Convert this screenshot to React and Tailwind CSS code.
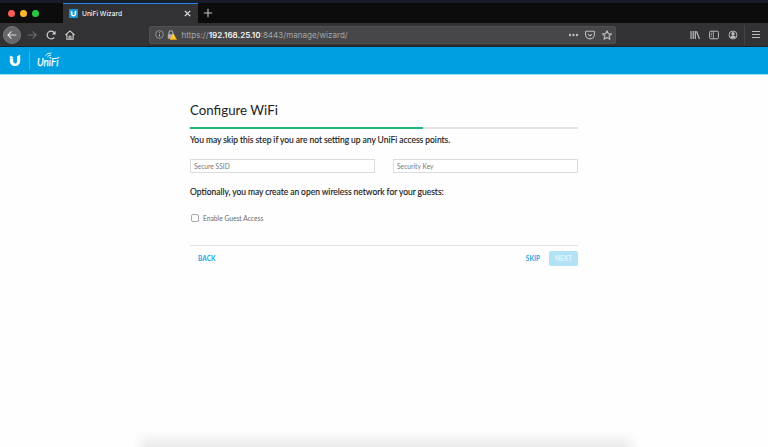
import React from "react";

const ui = "font-['Inter','Roboto',sans-serif]";

function UMark({ className }) {
  return (
    <svg className={className} viewBox="0 0 12 13" fill="none">
      <path d="M.8 1.500v5.200c0 3.200 2.200 5.300 5.200 5.300s5.200-2.100 5.200-5.300V.8L8 2.300v4.900c0 1.700-.8 2.300-1.800 2.300S4.200 8.600 4.200 6.800V2.800z" fill="#fff" />
      <path d="M1.900 .9v4.500M3.400 2.200v3" stroke="#009fe1" strokeWidth=".6" strokeDasharray=".8 .8" />
    </svg>
  );
}

function TabStrip() {
  return (
    <div className="flex h-5 bg-[#0c0c0c]">
      <div className="flex w-[63px] items-center gap-[5px] pl-2">
        <span className="size-[7px] rounded-full bg-[#fc5b57]" />
        <span className="size-[7px] rounded-full bg-[#fdb72b]" />
        <span className="size-[7px] rounded-full bg-[#27c840]" />
      </div>
      <div className="flex w-[135px] items-center border-t border-[#2686ee] bg-[#323234] pl-1.5 pr-[7px]">
        <span className="flex size-[9px] items-center justify-center bg-[#1294d6]">
          <UMark className="size-[7px]" />
        </span>
        <span className={`${ui} ml-1 pt-[2px] text-[6.600px] leading-none font-medium text-[#f0f0f0]`}>UniFi Wizard</span>
        <svg className="ml-auto size-[7px]" viewBox="0 0 7 7" stroke="#ededed" strokeWidth="1.100">
          <path d="M.8.8l5.400 5.400M6.200.8L.8 6.200" />
        </svg>
      </div>
      <div className="flex items-center pl-[5px]">
        <svg className="size-[10px]" viewBox="0 0 10 10" stroke="#c4c4c4" strokeWidth="1.100">
          <path d="M5 .8v8.400M.8 5h8.400" />
        </svg>
      </div>
    </div>
  );
}

function Toolbar() {
  return (
    <div className="flex h-6 items-center border-b border-[#222226] bg-[#323234] pl-[3px] pr-[7px]">
      <span className="flex size-[18px] items-center justify-center rounded-full border border-[#777] bg-[#666668]">
        <svg className="size-[10px]" viewBox="0 0 10 10" fill="none" stroke="#ddd" strokeWidth="1.100">
          <path d="M9.500 5H1M4.500 1.300L.9 5l3.600 3.700" />
        </svg>
      </span>
      <svg className="ml-1.5 size-[10px]" viewBox="0 0 10 10" fill="none" stroke="#6d6d6f" strokeWidth="1.100">
        <path d="M.5 5H9M5.500 1.300L9.100 5 5.500 8.700" />
      </svg>
      <svg className="ml-[9px] size-[10px]" viewBox="0 0 10 10" fill="none" stroke="#cfcfcf" strokeWidth="1.200">
        <path d="M8.200 7.300A3.900 3.900 0 1 1 8.200 2.700" />
        <path d="M9.600.8v3.700H5.900z" fill="#cfcfcf" stroke="none" />
      </svg>
      <svg className="ml-[9px] size-[10px]" viewBox="0 0 10 10" fill="none" stroke="#cfcfcf" strokeWidth="1.100">
        <path d="M.5 5L5 .9 9.500 5M1.900 4.300v4.900h6.200V4.300M4.100 9.200V6.200h1.800v3" />
      </svg>
      <div className="ml-[74px] flex h-[18px] w-[467px] items-center rounded-[2px] border border-[#505052] bg-[#474749] pl-[5px] pr-[3px]">
        <svg className="size-[9px]" viewBox="0 0 9 9" fill="none" stroke="#a4a4a6" strokeWidth=".8">
          <circle cx="4.500" cy="4.500" r="3.900" />
          <path d="M4.500 4v2.700M4.500 2.200v.9" strokeWidth="1" />
        </svg>
        <svg className="ml-[3px] h-[10px] w-[10px]" viewBox="0 0 10 10" fill="none">
          <path d="M2 4.500V2.600a1.900 1.900 0 0 1 3.800 0v1.900" stroke="#b0b0b0" strokeWidth="1.100" />
          <path d="M.8 4.200h6v4.500h-6z" fill="#b0b0b0" />
          <path d="M6.300 3.300L10 9.700H2.600z" fill="#fbbb16" />
          <path d="M6.300 5.500v2M6.300 8.100v.7" stroke="#fff" strokeWidth=".7" />
        </svg>
        <span className={`${ui} ml-[4.500px] pt-[2px] whitespace-nowrap text-[8.060px] leading-none text-[#a6a6a8]`}>
          https://<span className="font-semibold text-[#f2f2f2]">192.168.25.10</span>:8443/manage/wizard/
        </span>
        <svg className="ml-auto h-[10px] w-[11px]" viewBox="0 0 11 10" fill="#bcbcbc">
          <circle cx="2" cy="5" r="1.200" /><circle cx="5.500" cy="5" r="1.200" /><circle cx="9" cy="5" r="1.200" />
        </svg>
        <svg className="ml-1.5 size-[10px]" viewBox="0 0 10 10" fill="none" stroke="#bcbcbc" strokeWidth="1.100">
          <path d="M1.300 1.300h7.400q.7 0 .7.700v2.500a4.400 4.400 0 0 1-8.800 0V2q0-.7.700-.7zM3 4.200l2 1.900 2-1.900" />
        </svg>
        <svg className="ml-[7px] size-[10px]" viewBox="0 0 10 10" fill="none" stroke="#bcbcbc" strokeWidth="1.100" strokeLinejoin="round">
          <path d="M5 .7l1.300 2.900 3.200.3-2.400 2.100.8 3.200L5 7.500 2.100 9.200l.8-3.200L.5 3.900l3.200-.3z" />
        </svg>
      </div>
      <svg className="ml-[74px] size-[10px]" viewBox="0 0 10 10" fill="none" stroke="#bcbcbc" strokeWidth="1.200">
        <path d="M1 1v8M3.200 1v8M5.300 1v8M6.500 1.300l3 7.700" />
      </svg>
      <svg className="ml-[9px] size-[10px]" viewBox="0 0 10 10" fill="none" stroke="#bcbcbc">
        <rect x=".6" y="1.200" width="8.800" height="7.600" rx="1.200" />
        <path d="M4.400 1.500v7M1.900 3.200h1.300M1.900 4.700h1.300M1.900 6.200h1.300" strokeWidth=".8" />
      </svg>
      <svg className="ml-[9px] size-[10px]" viewBox="0 0 10 10" fill="none" stroke="#bcbcbc">
        <circle cx="5" cy="5" r="4" strokeWidth=".9" />
        <circle cx="5" cy="3.800" r="1.700" fill="#bcbcbc" stroke="none" />
        <path d="M2.100 7.300q.4-1.800 2.900-1.800t2.900 1.800Q5 9.200 2.100 7.300z" fill="#bcbcbc" stroke="none" />
      </svg>
      <span className="ml-1.5 h-5 w-px bg-[#444446]" />
      <svg className="ml-[7px] h-[9px] w-[8px]" viewBox="0 0 8 9" stroke="#bcbcbc" strokeWidth="1.100">
        <path d="M0 1.500h8M0 4.500h8M0 7.500h8" />
      </svg>
    </div>
  );
}

function BrandBar() {
  return (
    <div className="flex h-[27px] items-center bg-[#009fe1]">
      <UMark className="ml-[9px] h-[13px] w-[12px]" />
      <span className="ml-2 h-[19px] w-px bg-[#38b3e7]" />
      <svg className="ml-[6px] h-[18px] w-[27px]" viewBox="0 0 27 18" fill="none">
        <text x="1" y="13.800" fill="#fff" stroke="#fff" strokeWidth=".25" fontFamily="Lato, sans-serif" fontSize="12" fontStyle="italic" textLength="21.500" lengthAdjust="spacingAndGlyphs">UniFi</text>
        <path d="M11.400 4.900Q12.600 3 15 3.200M9.400 3.800Q11.400.7 15.400 1" stroke="#fff" strokeWidth=".9" />
        <path d="M23.500 5.500h1" stroke="#9edbf4" strokeWidth=".7" />
      </svg>
    </div>
  );
}

export default function App() {
  return (
    <div className="flex h-[447px] w-[768px] flex-col overflow-hidden bg-[#fefefe] font-['Lato',sans-serif]">
      <div className="h-[3px] bg-[#181e29]" />
      <TabStrip />
      <Toolbar />
      <BrandBar />
      <div className="h-px shrink-0 bg-[#a5def5]" />
      <main className="ml-[190px] w-[388px] pt-[26px]">
        <h1 className="h-[26px] text-[13.300px] leading-[18px] whitespace-nowrap text-[#222]">Configure WiFi</h1>
        <div className="h-0.5 bg-[#e3e3e3]">
          <div className="h-full w-[233px] bg-[#1fb574]" />
        </div>
        <p className="mt-[6px] text-[8.500px] leading-[11px] whitespace-nowrap text-[#222] [word-spacing:-0.2px] [-webkit-text-stroke:0.15px_#222]">
          You may skip this step if you are not setting up any UniFi access points.
        </p>
        <div className="mt-[13px] flex gap-[18px]">
          <input placeholder="Secure SSID" className="h-[14px] w-[185px] border border-[#dadddd] bg-white px-[3px] pb-px text-[6.700px] leading-none placeholder:text-[#777]" />
          <input placeholder="Security Key" className="h-[14px] w-[185px] border border-[#dadddd] bg-white px-[3px] pb-px text-[6.700px] leading-none placeholder:text-[#777]" />
        </div>
        <p className="mt-[14px] text-[8.500px] leading-[11px] whitespace-nowrap text-[#222] [word-spacing:-0.25px] [-webkit-text-stroke:0.15px_#222]">
          Optionally, you may create an open wireless network for your guests:
        </p>
        <label className="mt-[14px] flex h-3 items-center pl-px text-[6.700px] leading-none text-[#6c6c6c]">
          <span className="mr-[4px] size-2 rounded-[2px] border border-[#aaa] bg-white" />
          Enable Guest Access
        </label>
        <div className="mt-[21px] flex h-[21px] items-end border-t border-[#dfdfdf] text-[6.500px] font-bold tracking-[0.050px] text-[#19a7e0]">
          <button className="ml-2 h-[15px] leading-[14px]">BACK</button>
          <button className="ml-auto h-[15px] leading-[14px]">SKIP</button>
          <button className="ml-[9px] h-[15px] w-[29px] rounded-[2px] bg-[#b2e2f6] leading-[14px] text-[#e6f6fd]">NEXT</button>
        </div>
      </main>
      <div className="mt-auto ml-[133px] h-4 w-[506px] bg-linear-to-b from-transparent to-[#eaeaea] mask-x-from-97%" />
    </div>
  );
}
